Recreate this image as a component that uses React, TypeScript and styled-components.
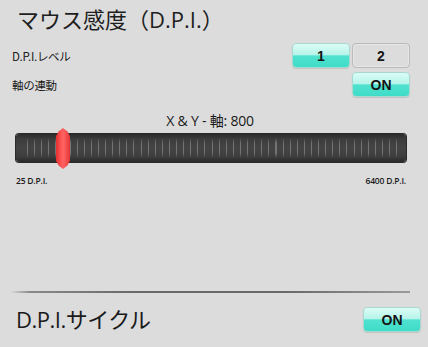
import React from "react";
import styled, { createGlobalStyle } from "styled-components";

const Global = createGlobalStyle`
  html, body { margin: 0; padding: 0; background: #dcdcdc; }
  body { font-family: "Open Sans", "Noto Sans CJK JP", sans-serif; color: #1a1a1a; }
`;

const Page = styled.div`
  width: 428px;
  height: 347px;
  box-sizing: border-box;
  display: flex;
  flex-direction: column;
  background: #dcdcdc;
  overflow: hidden;
`;

const Title = styled.h1`
  margin: 4px 0 0 0;
  padding-left: 17px;
  font-family: "Open Sans", "Noto Sans CJK JP", sans-serif;
  font-weight: 400;
  font-size: 22px;
  line-height: 30px;
  color: #1e1e1e;
`;

const Settings = styled.div`
  display: flex;
  flex-direction: column;
  gap: 4px;
  margin-top: 9px;
  padding: 0 18px 0 12px;
`;

const Row = styled.div`
  display: flex;
  align-items: center;
  justify-content: space-between;
  height: 25px;
`;

const Label = styled.span`
  font-family: "Noto Sans CJK JP", sans-serif;
  font-size: 11.5px;
  letter-spacing: -0.3px;
  color: #1a1a1a;
`;

const ButtonGroup = styled.div`
  display: flex;
  gap: 2px;
`;

const ToggleButton = styled.button<{ $active?: boolean }>`
  width: 58px;
  height: 25px;
  box-sizing: border-box;
  border-radius: 4px;
  border: 1px solid ${(p) => (p.$active ? "#aad8d0" : "#b9b9b9")};
  background: ${(p) =>
    p.$active
      ? "linear-gradient(to bottom, #dafcf6 0%, #b7f4e9 46%, #4fe2cf 52%, #3fdcc8 100%)"
      : "#dcdcdc"};
  box-shadow: ${(p) => (p.$active ? "0 1px 1px rgba(0,0,0,0.12)" : "inset 0 0 0 1px #e6e6e6")};
  font-family: "Liberation Sans", Arial, sans-serif;
  font-weight: 700;
  font-size: 14px;
  color: #151515;
  padding: 0;
  cursor: pointer;
`;

const SliderBlock = styled.div`
  display: flex;
  flex-direction: column;
  padding: 0 22px 0 16px;
  margin-top: 15px;
`;

const SliderLabel = styled.div`
  text-align: center;
  font-family: "Open Sans", "Noto Sans CJK JP", sans-serif;
  font-size: 14px;
  line-height: 18px;
  letter-spacing: -0.2px;
  color: #1a1a1a;
  padding-right: 2px;
`;

const Track = styled.div`
  position: relative;
  margin-top: 4px;
  height: 28px;
  border-radius: 3px;
  background: linear-gradient(to bottom, #2b2b2b 0%, #3d3d3d 20%, #444 50%, #3d3d3d 80%, #2a2a2a 100%);
  box-shadow: 0 0 0 1px #2a2a2a;
`;

const Ticks = styled.div`
  position: absolute;
  left: 6px;
  right: 6px;
  top: 4px;
  bottom: 4px;
  background: repeating-linear-gradient(
    90deg,
    transparent 0px,
    transparent 5px,
    rgba(165, 165, 165, 0.5) 5px,
    rgba(165, 165, 165, 0.5) 6px,
    transparent 6px,
    transparent 7.1px
  );
  -webkit-mask-image: linear-gradient(to bottom, transparent 0%, #000 25%, #000 75%, transparent 100%);
  mask-image: linear-gradient(to bottom, transparent 0%, #000 25%, #000 75%, transparent 100%);
`;

const Thumb = styled.div`
  position: absolute;
  top: -6px;
  width: 14px;
  height: 41px;
  clip-path: polygon(50% 0, 80% 8%, 100% 20%, 100% 80%, 80% 92%, 50% 100%, 20% 92%, 0 80%, 0 20%, 20% 8%);
  background: linear-gradient(90deg, #e52f2f 0%, #ff5a5a 40%, #ff6262 55%, #e43434 100%);
`;

const Scale = styled.div`
  display: flex;
  justify-content: space-between;
  margin-top: 13px;
  font-family: "Open Sans", sans-serif;
  font-size: 8.5px;
  font-weight: 600;
  letter-spacing: -0.2px;
  color: #1a1a1a;
`;

const Bottom = styled.div`
  margin-top: auto;
  display: flex;
  flex-direction: column;
  padding-bottom: 15px;
`;

const Separator = styled.div`
  height: 2px;
  margin: 0 18px 0 10px;
  background: linear-gradient(90deg, rgba(120,120,120,0) 0%, #8a8a8a 5%, #6a6a6a 30%, #6a6a6a 70%, #9a9a9a 100%);
`;

const BottomRow = styled.div`
  display: flex;
  align-items: center;
  justify-content: space-between;
  margin-top: 14px;
  padding: 0 7px 0 16px;
`;

const BottomLabel = styled.span`
  font-family: "Open Sans", "Noto Sans CJK JP", sans-serif;
  font-size: 22px;
  line-height: 25px;
  letter-spacing: -0.5px;
  color: #1a1a1a;
`;

export default function App() {
  const min = 25;
  const max = 6400;
  const value = 800;
  const trackWidth = 390;
  const thumbLeft = 40 + ((value - 800) / (max - min)) * trackWidth;

  return (
    <>
      <Global />
      <Page>
        <Title>マウス感度（D.P.I.）</Title>
        <Settings>
          <Row>
            <Label>D.P.I.レベル</Label>
            <ButtonGroup>
              <ToggleButton $active>1</ToggleButton>
              <ToggleButton>2</ToggleButton>
            </ButtonGroup>
          </Row>
          <Row>
            <Label>軸の連動</Label>
            <ToggleButton $active>ON</ToggleButton>
          </Row>
        </Settings>
        <SliderBlock>
          <SliderLabel>X &amp; Y - 軸: 800</SliderLabel>
          <Track>
            <Ticks />
            <Thumb style={{ left: `${thumbLeft}px` }} />
          </Track>
          <Scale>
            <span>25 D.P.I.</span>
            <span>6400 D.P.I.</span>
          </Scale>
        </SliderBlock>
        <Bottom>
          <Separator />
          <BottomRow>
            <BottomLabel>D.P.I.サイクル</BottomLabel>
            <ToggleButton $active>ON</ToggleButton>
          </BottomRow>
        </Bottom>
      </Page>
    </>
  );
}
